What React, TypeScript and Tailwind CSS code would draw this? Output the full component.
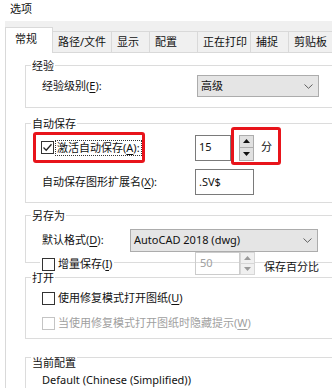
import React from "react";
import clsx from "clsx";

const Check = ({ checked, disabled }: { checked?: boolean; disabled?: boolean }) => (
  <span
    className={clsx(
      "flex h-[13px] w-[13px] shrink-0 items-center justify-center border bg-white",
      disabled ? "border-[#c4c4c4]" : "border-[#333333]"
    )}
  >
    {checked && (
      <svg width="11" height="11" viewBox="0 0 11 11">
        <path d="M1.5 5.5 L4.2 8.2 L9.5 2.2" fill="none" stroke="#222" strokeWidth="1.3" />
      </svg>
    )}
  </span>
);

const Spinner = ({ disabled, height }: { disabled?: boolean; height: string }) => {
  const arrow = disabled ? "#9a9a9a" : "#111";
  return (
    <div className={clsx("flex w-[15px] shrink-0 flex-col", height)}>
      {[0, 1].map((i) => (
        <div
          key={i}
          className={clsx(
            "flex flex-1 items-center justify-center border",
            i === 1 && "-mt-px",
            disabled ? "border-[#d6d6d6] bg-[#f0f0f0]" : "border-[#adadad] bg-[#e1e1e1]"
          )}
        >
          <svg width="7" height="4" viewBox="0 0 7 4">
            <path d={i === 0 ? "M0 4 L3.5 0 L7 4 Z" : "M0 0 L3.5 4 L7 0 Z"} fill={arrow} />
          </svg>
        </div>
      ))}
    </div>
  );
};

const Chevron = () => (
  <svg width="9" height="5" viewBox="0 0 9 5" className="shrink-0">
    <path d="M0.5 0.5 L4.5 4.3 L8.5 0.5" fill="none" stroke="#606060" strokeWidth="1" />
  </svg>
);

const U = ({ children }: { children: React.ReactNode }) => (
  <span className="underline underline-offset-[2px]">{children}</span>
);

function Group({
  title,
  className,
  labelClass = "-mt-[8px] leading-[16px]",
  children,
}: {
  title: string;
  className?: string;
  labelClass?: string;
  children: React.ReactNode;
}) {
  return (
    <div className={clsx("ml-[19px] w-[360px] border border-[#dcdcdc]", className)}>
      <span className={clsx("ml-[5px] block w-fit bg-white px-[1px]", labelClass)}>{title}</span>
      {children}
    </div>
  );
}

const tabs = [
  { label: "路径/文件", w: "w-[59px]" },
  { label: "显示", w: "w-[38px]" },
  { label: "配置", w: "w-[48px]" },
  { label: "正在打印", w: "w-[53px]" },
  { label: "捕捉", w: "w-[38px]" },
  { label: "剪贴板", w: "w-[60px]" },
];

export default function App() {
  return (
    <div className="h-[388px] w-[332px] overflow-hidden bg-white text-[11px] text-[#111] font-['Noto_Sans','Noto_Sans_CJK_SC',sans-serif]">
      <div className="h-[21px] pl-[10px] text-[11px] leading-[18px]">选项</div>

      <div className="ml-[5px] flex h-[31px] w-[400px] items-end bg-[#f0f0f0]">
        <div className="relative z-10 -mb-px flex h-[26px] w-[48px] items-center border-x border-t border-[#d9d9d9] bg-white pb-[2px] pl-[9px]">
          常规
        </div>
        {tabs.map((t) => (
          <div
            key={t.label}
            className={clsx(
              "flex h-[21px] shrink-0 items-center border-r border-t border-[#d9d9d9] pl-[5px]",
              t.w
            )}
          >
            {t.label}
          </div>
        ))}
      </div>

      <div className="ml-[5px] h-[400px] w-[400px] border-l border-t border-[#d9d9d9] bg-white">
        <Group title="经验" className="mt-[12px] pb-[10px]">
          <div className="mt-[1px] flex h-[22px] items-center pl-[16px]">
            <span className="w-[155px]">
              经验级别(<U>E</U>):
            </span>
            <div className="flex h-[22px] w-[122px] items-center justify-between border border-[#acacac] bg-[#e5e5e5] pl-[3px] pr-[5px]">
              <span>高级</span>
              <Chevron />
            </div>
          </div>
        </Group>

        <Group title="自动保存" className="mt-[15px] pb-[7px]">
          <div className="relative flex h-[31px] items-center pl-[7px]">
            <div className="flex h-[31px] w-[112px] shrink-0 items-center rounded-[3px] border-[3px] border-[#e8141b] pl-[5px]">
              <Check checked />
              <span className="ml-[1px] whitespace-nowrap border border-dotted border-[#333] px-[1px] leading-[14px]">
                激活自动保存(<U>A</U>):
              </span>
            </div>
            <div className="ml-[50px] flex h-[26px] w-[36px] items-center border border-[#7a7a7a] pl-[3px]">
              15
            </div>
            <div className="ml-[8px]">
              <Spinner height="h-[26px]" />
            </div>
            <span className="ml-[7px]">分</span>
            <div className="absolute left-[205px] top-[-5px] h-[38px] w-[50px] rounded-[3px] border-[3px] border-[#e8141b]" />
          </div>
          <div className="mt-[6px] flex h-[26px] items-center pl-[16px]">
            <span className="w-[153px]">
              自动保存图形扩展名(<U>X</U>):
            </span>
            <div className="flex h-[26px] w-[59px] items-center border border-[#7a7a7a] pl-[3px]">
              .SV$
            </div>
          </div>
        </Group>

        <Group title="另存为" className="mt-[12px] pb-[10px]">
          <div className="mt-[5px] flex h-[23px] items-center pl-[16px]">
            <span className="w-[88px]">
              默认格式(<U>D</U>):
            </span>
            <div className="flex h-[23px] w-[188px] items-center justify-between border border-[#acacac] bg-[#e5e5e5] pl-[3px] pr-[5px]">
              <span>AutoCAD 2018 (dwg)</span>
              <Chevron />
            </div>
          </div>
        </Group>

        <div className="relative -mt-[11px] flex h-[23px] items-start pl-[34px]">
          <div className="w-[155px]">
            <div className="mt-[4px] flex h-[16px] w-fit items-center gap-[3px] bg-white px-[2px]">
              <Check />
              <span>
                增量保存(<U>I</U>)
              </span>
            </div>
          </div>
          <div className="flex h-[23px] w-[45px] items-center border border-[#cccccc] pl-[4px] text-[#a0a0a0]">
            50
          </div>
          <Spinner disabled height="h-[23px]" />
          <span className="ml-[9px] mt-[7px] leading-[16px]">保存百分比</span>
        </div>

        <Group title="打开" className="mt-[2px] pb-[7px]">
          <div className="mt-[4px] flex h-[16px] items-center gap-[3px] pl-[16px]">
            <Check />
            <span>
              使用修复模式打开图纸(<U>U</U>)
            </span>
          </div>
          <div className="mt-[9px] flex h-[16px] items-center gap-[3px] pl-[16px] text-[#a0a0a0]">
            <Check disabled />
            <span>
              当使用修复模式打开图纸时隐藏提示(<U>W</U>)
            </span>
          </div>
        </Group>

        <Group title="当前配置" className="mt-[18px] h-[60px]" labelClass="-mt-[2px] leading-[14px]">
          <div className="mt-[3px] h-[14px] pl-[16px] leading-[14px]">Default (Chinese (Simplified))</div>
        </Group>
      </div>
    </div>
  );
}
